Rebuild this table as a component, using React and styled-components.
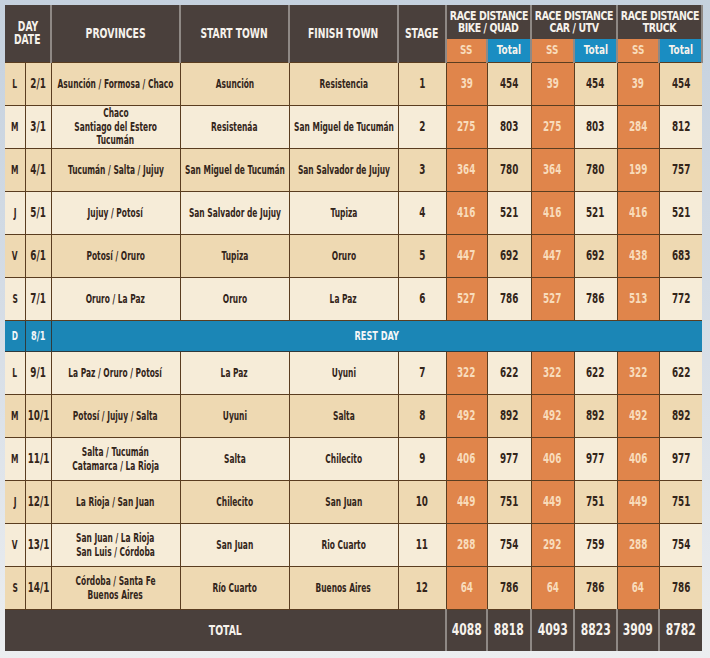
import React from "react";
import styled, { createGlobalStyle } from "styled-components";

const C = {
  header: "#4a403c",
  tan: "#eed9b2",
  cream: "#f6ecd8",
  orange: "#e0854b",
  ssText: "#f8dcbc",
  blue: "#1a8dc2",
  rest: "#1b86b6",
  line: "#5a3d20",
  headLine: "#8f8985",
  ink: "#33251a",
};

const FONT = '"DejaVu Sans Condensed", "DejaVu Sans", sans-serif';

const Global = createGlobalStyle`
  html, body { margin: 0; padding: 0; }
  body {
    min-height: 658px;
    background: linear-gradient(180deg, #c5d1de 0%, #d8dfe7 55%, #eceef0 100%);
    font-family: ${FONT};
  }
`;

const Page = styled.div`
  padding: 5px;
`;

const Table = styled.table`
  width: 697px;
  table-layout: fixed;
  border-collapse: collapse;
  font-family: ${FONT};
  color: ${C.ink};
`;

const Col = styled.col`
  width: ${(p) => p.$w}px;
`;

/* condensed-type helpers: gives the narrow look of the original face */
const Fit = styled.div`
  display: flex;
  flex-direction: column;
  align-items: center;
  justify-content: center;
`;

const Squeeze = styled.span`
  display: block;
  white-space: nowrap;
  letter-spacing: ${(p) => p.$ls || 0}px;
  transform: scaleX(${(p) => p.$x || 0.7});
  transform-origin: center;
`;

const Lines = ({ lines, x, ls }) => (
  <Fit>
    {lines.map((l, i) => (
      <Squeeze key={i} $x={x} $ls={ls}>
        {l}
      </Squeeze>
    ))}
  </Fit>
);

const HeadRow = styled.tr`
  height: ${(p) => p.$h}px;
`;

const Th = styled.th`
  background: ${(p) => (p.$kind === "ss" ? C.orange : p.$kind === "total" ? C.blue : C.header)};
  color: ${(p) => (p.$kind === "ss" ? C.ssText : "#f6f2ec")};
  font-size: ${(p) => p.$fs || 14}px;
  line-height: ${(p) => p.$lh || 12}px;
  font-weight: 700;
  text-align: center;
  vertical-align: middle;
  padding: 0;
  border-left: 2px solid ${C.headLine};
  border-right: 2px solid ${C.headLine};
  border-top: none;
  border-bottom: none;
  &:first-child { border-left: none; }
`;

const Row = styled.tr`
  height: 43px;
  background: ${(p) => (p.$tone === "tan" ? C.tan : C.cream)};
`;

const Td = styled.td`
  padding: 0;
  text-align: center;
  vertical-align: middle;
  font-size: ${(p) => (p.$num ? 14 : 13)}px;
  line-height: 13.5px;
  font-weight: 700;
  border: 1.5px solid ${C.line};
  background: ${(p) => (p.$ss ? C.orange : "transparent")};
  color: ${(p) => (p.$ss ? C.ssText : C.ink)};
  &:first-child { border-left: none; }
  &:last-child { border-right: none; }
`;

const RestRow = styled.tr`
  height: 31px;
  background: ${C.rest};
`;

const RestCell = styled.td`
  padding: 0;
  text-align: center;
  vertical-align: middle;
  color: #f4f6f8;
  font-size: 13px;
  font-weight: 700;
  border: 1.5px solid #2f3a3c;
  &:first-child { border-left: none; }
  &:last-child { border-right: none; }
`;

const TotalRow = styled.tr`
  height: 42px;
  background: ${C.header};
`;

const TotalCell = styled.td`
  padding: 0;
  text-align: center;
  vertical-align: middle;
  color: #f6f2ec;
  font-size: ${(p) => (p.$label ? 14 : 15)}px;
  font-weight: 700;
  border-top: 1.5px solid ${C.line};
  border-bottom: none;
  border-left: 2px solid ${C.headLine};
  border-right: 2px solid ${C.headLine};
  &:first-child { border-left: none; }
  &:last-child { border-right: none; }
`;

const widths = [20, 26, 129, 109, 109, 48, 41, 44, 43, 43, 42, 43];

const TEXT_X = 0.64;
const NUM_X = 0.7;

const rows = [
  ["L", "2/1", ["Asunción / Formosa / Chaco"], "Asunción", "Resistencia", 1, [39, 454, 39, 454, 39, 454]],
  ["M", "3/1", ["Chaco", "Santiago del Estero", "Tucumán"], "Resistenáa", "San Miguel de Tucumán", 2, [275, 803, 275, 803, 284, 812]],
  ["M", "4/1", ["Tucumán / Salta / Jujuy"], "San Miguel de Tucumán", "San Salvador de Jujuy", 3, [364, 780, 364, 780, 199, 757]],
  ["J", "5/1", ["Jujuy / Potosí"], "San Salvador de Jujuy", "Tupiza", 4, [416, 521, 416, 521, 416, 521]],
  ["V", "6/1", ["Potosí / Oruro"], "Tupiza", "Oruro", 5, [447, 692, 447, 692, 438, 683]],
  ["S", "7/1", ["Oruro / La Paz"], "Oruro", "La Paz", 6, [527, 786, 527, 786, 513, 772]],
];

const rows2 = [
  ["L", "9/1", ["La Paz / Oruro / Potosí"], "La Paz", "Uyuni", 7, [322, 622, 322, 622, 322, 622]],
  ["M", "10/1", ["Potosí / Jujuy / Salta"], "Uyuni", "Salta", 8, [492, 892, 492, 892, 492, 892]],
  ["M", "11/1", ["Salta / Tucumán", "Catamarca / La Rioja"], "Salta", "Chilecito", 9, [406, 977, 406, 977, 406, 977]],
  ["J", "12/1", ["La Rioja / San Juan"], "Chilecito", "San Juan", 10, [449, 751, 449, 751, 449, 751]],
  ["V", "13/1", ["San Juan / La Rioja", "San Luis / Córdoba"], "San Juan", "Rio Cuarto", 11, [288, 754, 292, 759, 288, 754]],
  ["S", "14/1", ["Córdoba / Santa Fe", "Buenos Aires"], "Río Cuarto", "Buenos Aires", 12, [64, 786, 64, 786, 64, 786]],
];

const totals = [4088, 8818, 4093, 8823, 3909, 8782];

function StageRow({ r, tone }) {
  const [d, date, prov, start, finish, stage, nums] = r;
  return (
    <Row $tone={tone}>
      <Td><Lines lines={[d]} x={TEXT_X} /></Td>
      <Td $num><Lines lines={[date]} x={NUM_X} /></Td>
      <Td><Lines lines={prov} x={TEXT_X} /></Td>
      <Td><Lines lines={[start]} x={TEXT_X} /></Td>
      <Td><Lines lines={[finish]} x={TEXT_X} /></Td>
      <Td $num><Lines lines={[stage]} x={NUM_X} /></Td>
      {nums.map((n, i) => (
        <Td key={i} $num $ss={i % 2 === 0}>
          <Lines lines={[n]} x={NUM_X} />
        </Td>
      ))}
    </Row>
  );
}

export default function App() {
  return (
    <>
      <Global />
      <Page>
        <Table>
          <colgroup>
            {widths.map((w, i) => (
              <Col key={i} $w={w} />
            ))}
          </colgroup>
          <thead>
            <HeadRow $h={34}>
              <Th colSpan={2} rowSpan={2} $lh={13}>
                <Lines lines={["DAY", "DATE"]} x={0.73} />
              </Th>
              <Th rowSpan={2}><Lines lines={["PROVINCES"]} x={0.74} /></Th>
              <Th rowSpan={2}><Lines lines={["START TOWN"]} x={0.73} /></Th>
              <Th rowSpan={2}><Lines lines={["FINISH TOWN"]} x={0.73} /></Th>
              <Th rowSpan={2}><Lines lines={["STAGE"]} x={0.74} /></Th>
              <Th colSpan={2} $fs={11.5} $lh={12}>
                <Lines lines={["RACE DISTANCE", "BIKE / QUAD"]} x={0.91} ls={-0.45} />
              </Th>
              <Th colSpan={2} $fs={11.5} $lh={12}>
                <Lines lines={["RACE DISTANCE", "CAR / UTV"]} x={0.91} ls={-0.45} />
              </Th>
              <Th colSpan={2} $fs={11.5} $lh={12}>
                <Lines lines={["RACE DISTANCE", "TRUCK"]} x={0.91} ls={-0.45} />
              </Th>
            </HeadRow>
            <HeadRow $h={23}>
              <Th $kind="ss" $fs={13}><Lines lines={["SS"]} x={0.76} /></Th>
              <Th $kind="total" $fs={13}><Lines lines={["Total"]} x={0.76} /></Th>
              <Th $kind="ss" $fs={13}><Lines lines={["SS"]} x={0.76} /></Th>
              <Th $kind="total" $fs={13}><Lines lines={["Total"]} x={0.76} /></Th>
              <Th $kind="ss" $fs={13}><Lines lines={["SS"]} x={0.76} /></Th>
              <Th $kind="total" $fs={13}><Lines lines={["Total"]} x={0.76} /></Th>
            </HeadRow>
          </thead>
          <tbody>
            {rows.map((r, i) => (
              <StageRow key={r[1]} r={r} tone={i % 2 === 0 ? "tan" : "cream"} />
            ))}
            <RestRow>
              <RestCell><Lines lines={["D"]} x={TEXT_X} /></RestCell>
              <RestCell><Lines lines={["8/1"]} x={NUM_X} /></RestCell>
              <RestCell colSpan={10}><Lines lines={["REST DAY"]} x={0.7} /></RestCell>
            </RestRow>
            {rows2.map((r, i) => (
              <StageRow key={r[1]} r={r} tone={i % 2 === 0 ? "cream" : "tan"} />
            ))}
            <TotalRow>
              <TotalCell colSpan={6} $label><Lines lines={["TOTAL"]} x={0.74} /></TotalCell>
              {totals.map((t, i) => (
                <TotalCell key={i}><Lines lines={[t]} x={0.8} /></TotalCell>
              ))}
            </TotalRow>
          </tbody>
        </Table>
      </Page>
    </>
  );
}
